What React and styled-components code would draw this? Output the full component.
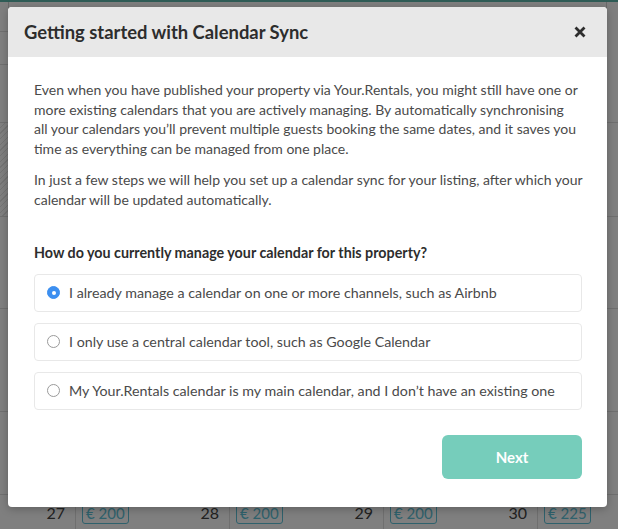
import React from 'react'
import styled, { createGlobalStyle } from 'styled-components'

const GlobalStyle = createGlobalStyle`
  html, body { margin: 0; padding: 0; }
  body { font-family: Lato, "Liberation Sans", sans-serif; background: #fff; }
  * { box-sizing: border-box; }
`

const Page = styled.div`
  position: relative;
  width: 618px;
  height: 529px;
  overflow: hidden;
`

/* calendar behind the dialog */
const Calendar = styled.div`
  display: flex;
  flex-direction: column;
  height: 100%;
  border-top: 2px solid #5fb8ac;
`
const Week = styled.div`
  height: ${p => p.h}px;
  flex-shrink: 0;
  display: grid;
  grid-template-columns: 8px 1fr 11px;
  border-bottom: 1px solid #dedede;
`
const Side = styled.div`
  display: flex;
  flex-direction: column;
  background: ${p => p.hatched
    ? 'repeating-linear-gradient(135deg, #fff 0 3px, #e6e6e6 3px 4px)'
    : '#fff'};
`
const SideLine = styled.div`
  height: ${p => p.h}px;
  border-bottom: 1px solid #dedede;
`
const Main = styled.div`
  border-left: 1px solid #d4d4d4;
  border-right: 1px solid #d4d4d4;
`
const DaysRow = styled.div`
  display: grid;
  grid-template-columns: repeat(5, 154px);
  margin-left: -78px;
  flex: 1;
`
const Day = styled.div`
  display: flex;
  justify-content: space-between;
  align-items: flex-start;
  padding: 8px 10px 0 6px;
  border-right: 1px solid #dedede;
`
const Price = styled.span`
  border: 1px solid #5ec3d8;
  border-radius: 3px;
  color: #5ec3d8;
  font-size: 15px;
  padding: 0 3px;
  line-height: 19px;
`
const DayNum = styled.span`
  font-size: 16px;
  color: #444;
  line-height: 19px;
`

const Overlay = styled.div`
  position: absolute;
  inset: 0;
  background: rgba(0, 0, 0, 0.5);
`

/* dialog */
const Modal = styled.div`
  position: absolute;
  top: 7px;
  left: 8px;
  width: 599px;
  background: #fff;
  border-radius: 4px;
  overflow: hidden;
  box-shadow: 0 2px 8px rgba(0, 0, 0, 0.25);
`
const Header = styled.div`
  height: 50px;
  background: #e8e8e8;
  display: flex;
  align-items: center;
  justify-content: space-between;
  padding: 0 21px 0 16px;
`
const Title = styled.h1`
  margin: 0;
  font-size: 18.4px;
  font-weight: 700;
  color: #2d2d2d;
`
const Close = styled.button`
  border: 0;
  background: none;
  padding: 0;
  width: 12px;
  height: 12px;
  display: flex;
  cursor: pointer;
`
const Body = styled.div`
  padding: 23px 25px 28px 26px;
`
const Text = styled.p`
  margin: 0 0 12px;
  font-size: 14px;
  line-height: 19.5px;
  color: #4a4a4a;
  white-space: nowrap;
`
const Question = styled.h2`
  margin: 34px 0 11px;
  font-size: 14.3px;
  line-height: 19.5px;
  font-weight: 700;
  color: #2d2d2d;
`
const Options = styled.div`
  display: flex;
  flex-direction: column;
  gap: 11px;
`
const Option = styled.label`
  height: 38px;
  border: 1px solid #e8e8e8;
  border-radius: 4px;
  display: flex;
  align-items: center;
  gap: 9px;
  padding-left: 12px;
  font-size: 14.25px;
  color: #4a4a4a;
  cursor: pointer;
`
const Radio = styled.span`
  width: 13px;
  height: 13px;
  border-radius: 50%;
  flex-shrink: 0;
  display: flex;
  align-items: center;
  justify-content: center;
  background: ${p => p.checked ? '#3c8ff0' : '#fff'};
  border: 1px solid ${p => p.checked ? '#3c8ff0' : '#9a9a9a'};
  &::after {
    content: '';
    width: 4px;
    height: 4px;
    border-radius: 50%;
    background: #fff;
    display: ${p => p.checked ? 'block' : 'none'};
  }
`
const Footer = styled.div`
  display: flex;
  justify-content: flex-end;
  margin-top: 25px;
`
const NextButton = styled.button`
  width: 140px;
  height: 44px;
  border: 0;
  border-radius: 6px;
  background: #76cdbb;
  color: #fff;
  font-family: Lato, "Liberation Sans", sans-serif;
  font-weight: 700;
  font-size: 15px;
  cursor: pointer;
`

const options = [
  'I already manage a calendar on one or more channels, such as Airbnb',
  'I only use a central calendar tool, such as Google Calendar',
  'My Your.Rentals calendar is my main calendar, and I don\u2019t have an existing one',
]

const days = [
  { n: 27, p: 200 },
  { n: 28, p: 200 },
  { n: 29, p: 200 },
  { n: 30, p: 200 },
  { n: 31, p: 225 },
]

export default function App() {
  const [choice, setChoice] = React.useState(0)
  return (
    <Page>
      <GlobalStyle />
      <Calendar>
        <Week h={121}>
          <Side>
            <SideLine h={30} />
            <SideLine h={33} />
          </Side>
          <Main />
          <Side />
        </Week>
        <Week h={94}>
          <Side hatched />
          <Main />
          <Side />
        </Week>
        <Week h={92}><Side /><Main /><Side /></Week>
        <Week h={103}><Side /><Main /><Side /></Week>
        <Week h={83}><Side /><Main /><Side /></Week>
        <DaysRow>
          {days.map(d => (
            <Day key={d.n}>
              <Price>€ {d.p}</Price>
              <DayNum>{d.n}</DayNum>
            </Day>
          ))}
        </DaysRow>
      </Calendar>
      <Overlay />
      <Modal>
        <Header>
          <Title>Getting started with Calendar Sync</Title>
          <Close aria-label="Close">
            <svg width="12" height="12" viewBox="0 0 12 12">
              <path d="M1.5 1.5 L10.5 10.5 M10.5 1.5 L1.5 10.5" stroke="#2d2d2d" strokeWidth="2.8" />
            </svg>
          </Close>
        </Header>
        <Body>
          <Text>
            Even when you have published your property via Your.Rentals, you might still have one or<br />
            more existing calendars that you are actively managing. By automatically synchronising<br />
            all your calendars you’ll prevent multiple guests booking the same dates, and it saves you<br />
            time as everything can be managed from one place.
          </Text>
          <Text>
            In just a few steps we will help you set up a calendar sync for your listing, after which your<br />
            calendar will be updated automatically.
          </Text>
          <Question>How do you currently manage your calendar for this property?</Question>
          <Options>
            {options.map((o, i) => (
              <Option key={i} onClick={() => setChoice(i)}>
                <Radio checked={choice === i} />
                {o}
              </Option>
            ))}
          </Options>
          <Footer>
            <NextButton>Next</NextButton>
          </Footer>
        </Body>
      </Modal>
    </Page>
  )
}
